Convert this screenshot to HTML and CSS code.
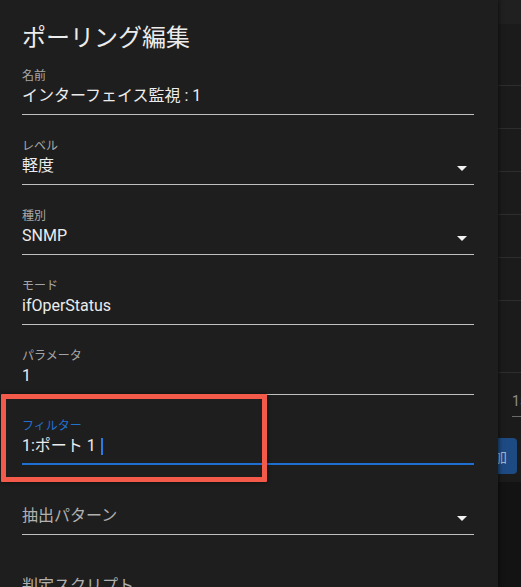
FILE: index.html
```html
<!DOCTYPE html>
<html lang="ja">
<head>
<meta charset="utf-8">
<title>ポーリング編集</title>
<link rel="stylesheet" href="styles.css">
</head>
<body>
<div class="page">
  <div class="appbar"></div>
  <div class="card">
    <div class="row row-head"></div>
    <div class="row"></div>
    <div class="row"></div>
    <div class="row"></div>
    <div class="row"></div>
    <div class="row"></div>
    <div class="row row-tall"></div>
    <div class="pager"><span class="pager-num">15</span></div>
    <div class="actions"><button class="add">追加</button></div>
  </div>
</div>

<div class="dialog">
  <h2 class="title">ポーリング編集</h2>
  <div class="form">
    <div class="field">
      <span class="label">名前</span>
      <div class="value">インターフェイス監視 : 1</div>
    </div>
    <div class="field">
      <span class="label">レベル</span>
      <div class="value select"><span>軽度</span><svg class="arrow" width="24" height="20" viewBox="0 0 24 20"><path d="M7 10l5 5 5-5z"/></svg></div>
    </div>
    <div class="field">
      <span class="label">種別</span>
      <div class="value select"><span>SNMP</span><svg class="arrow" width="24" height="20" viewBox="0 0 24 20"><path d="M7 10l5 5 5-5z"/></svg></div>
    </div>
    <div class="field">
      <span class="label">モード</span>
      <div class="value">ifOperStatus</div>
    </div>
    <div class="field">
      <span class="label">パラメータ</span>
      <div class="value">1</div>
    </div>
    <div class="field focused">
      <span class="label">フィルター</span>
      <div class="value">1:ポート 1<span class="caret"></span></div>
    </div>
    <div class="field empty">
      <div class="value select"><span class="placeholder">抽出パターン</span><svg class="arrow" width="24" height="20" viewBox="0 0 24 20"><path d="M7 10l5 5 5-5z"/></svg></div>
    </div>
    <div class="field empty">
      <div class="value"><span class="placeholder">判定スクリプト</span></div>
    </div>
  </div>
</div>

<div class="highlight"></div>
</body>
</html>
```

FILE: styles.css
```css
* { box-sizing: border-box; }

html, body {
  margin: 0;
  padding: 0;
  width: 521px;
  height: 587px;
  overflow: hidden;
  background: #131313;
  font-family: Roboto, "Noto Sans CJK JP", sans-serif;
}

/* background page (under the dialog) */
.page {
  display: flex;
  flex-direction: column;
  width: 521px;
}

.appbar {
  height: 24px;
  background: #202020;
}

.card {
  display: flex;
  flex-direction: column;
  background: #1b1b1b;
  padding-bottom: 8px;
}

.row {
  height: 43px;
  border-bottom: 1px solid #2d2d2d;
}

.row-head { height: 62px; }
.row-tall { height: 72px; }

.pager {
  padding: 18px 0 0 512px;
}

.pager-num {
  display: block;
  width: 40px;
  line-height: 20px;
  padding-bottom: 5px;
  border-bottom: 1px solid #6a6a6a;
  color: #8e8e8e;
  font-size: 14px;
}

.actions {
  display: flex;
  justify-content: flex-end;
  padding: 21px 4px 0 0;
}

.add {
  height: 36px;
  padding: 0 10px;
  border: none;
  border-radius: 4px;
  background: #1d4a82;
  color: #9fb3cc;
  font-family: Roboto, "Noto Sans CJK JP", sans-serif;
  font-size: 14px;
}

/* dialog */
.dialog {
  position: absolute;
  left: 0;
  top: 0;
  width: 498px;
  height: 587px;
  overflow: hidden;
  background: #1e1e1e;
  box-shadow: 1px 0 4px rgba(0, 0, 0, 0.55);
  padding: 22px 24px 0 22px;
  display: flex;
  flex-direction: column;
}

.title {
  margin: 0 0 15px;
  font-size: 24px;
  line-height: 32px;
  font-weight: 400;
  color: #ececec;
}

.form {
  display: flex;
  flex-direction: column;
  gap: 24px;
}

.field {
  position: relative;
  display: flex;
  flex-direction: column;
  padding-bottom: 8px;
  border-bottom: 1px solid rgba(255, 255, 255, 0.72);
}

.label {
  font-size: 12px;
  line-height: 14px;
  color: rgba(255, 255, 255, 0.62);
}

.value {
  margin-top: 3px;
  font-size: 16px;
  line-height: 20px;
  color: #ececec;
  display: flex;
  align-items: center;
}

.value.select {
  justify-content: space-between;
}

.arrow {
  display: block;
  fill: #f2f2f2;
}

.field.empty .value {
  margin-top: 17px;
}

.placeholder {
  color: rgba(255, 255, 255, 0.66);
}

.field.focused .label {
  color: #2270cf;
}

.field.focused::after {
  content: "";
  position: absolute;
  left: 0;
  right: 0;
  bottom: -1px;
  height: 2px;
  background: #1f6fd2;
}

.caret {
  display: inline-block;
  width: 2px;
  height: 17px;
  margin-left: 5px;
  background: #2a7ae0;
}

/* annotation overlay */
.highlight {
  position: absolute;
  left: 1px;
  top: 394px;
  width: 266px;
  height: 88px;
  border: 5px solid #f45a4a;
  border-radius: 1px;
  box-shadow: 0 0 4px rgba(0, 0, 0, 0.6);
}
```
